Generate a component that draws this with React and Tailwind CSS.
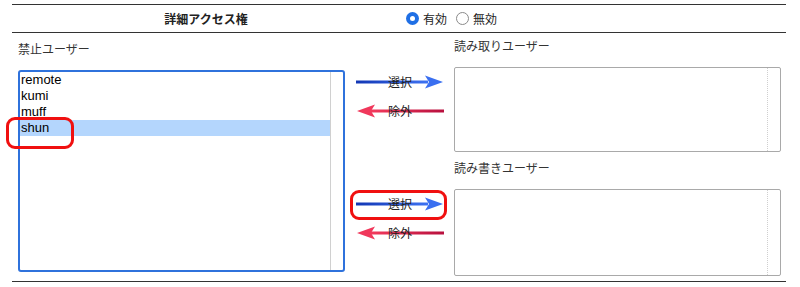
import React from 'react'

const jp = { fontFamily: '"Noto Sans CJK JP", "Noto Sans", sans-serif' }
const latin = { fontFamily: '"Liberation Sans", Arial, sans-serif' }

const ArrowRight = () => (
  <svg width="88" height="14" viewBox="0 0 88 14">
    <defs>
      <linearGradient id="gr" x1="0" x2="1" y1="0" y2="0">
        <stop offset="0" stopColor="#1236b4" />
        <stop offset="1" stopColor="#3d72f2" />
      </linearGradient>
    </defs>
    <rect x="0" y="5.5" width="72" height="3" fill="url(#gr)" />
    <path d="M69 0.5 L87 7 L69 13.5 L73 7 Z" fill="#3a6ff0" />
  </svg>
)

const ArrowLeft = () => (
  <svg width="88" height="14" viewBox="0 0 88 14">
    <defs>
      <linearGradient id="gl" x1="0" x2="1" y1="0" y2="0">
        <stop offset="0" stopColor="#f23a5c" />
        <stop offset="1" stopColor="#b8103e" />
      </linearGradient>
    </defs>
    <rect x="15" y="5.5" width="73" height="3" fill="url(#gl)" />
    <path d="M19 0.5 L1 7 L19 13.5 L15 7 Z" fill="#f0385b" />
  </svg>
)

const MoveButton = ({ dir, label }) => (
  <div className="relative w-[88px] h-[14px]">
    {dir === 'right' ? <ArrowRight /> : <ArrowLeft />}
    <span className="absolute inset-0 flex items-center justify-center text-[12px] text-[#222] leading-none" style={jp}>
      {label}
    </span>
  </div>
)

const Radio = ({ checked }) =>
  checked ? (
    <span className="shrink-0 w-[13px] h-[13px] rounded-full bg-[#1f6fe5] flex items-center justify-center">
      <span className="w-[5px] h-[5px] rounded-full bg-white" />
    </span>
  ) : (
    <span className="shrink-0 block w-[13px] h-[13px] rounded-full border border-[#8a8a8a] bg-white" />
  )

const EmptyBox = ({ h }) => (
  <div className="flex w-[327px] border-[1.5px] border-[#a9a9a9] rounded-[2px] bg-white" style={{ height: h }}>
    <div className="flex-1" />
    <div className="w-[13px] border-l border-dotted border-[#cfcfcf]" />
  </div>
)

export default function App() {
  const users = ['remote', 'kumi', 'muff', 'shun']
  return (
    <div className="relative w-[800px] h-[287px] bg-white text-[#333]">
      <div className="ml-[12px] mt-[4px] w-[774px] border-t border-[#333]">
        <div className="flex h-[28px] items-center border-b border-[#333]">
          <div className="w-[388px] text-center text-[12px] font-bold text-[#222]" style={jp}>
            詳細アクセス権
          </div>
          <div className="flex items-center text-[12px] text-[#222] pl-[6px]" style={jp}>
            <Radio checked />
            <span className="ml-[4px]">有効</span>
            <span className="ml-[9px]"><Radio /></span>
            <span className="ml-[4px]">無効</span>
          </div>
        </div>

        <div className="flex h-[249px] border-b border-[#333]">
          <div className="ml-[6px] w-[327px]">
            <div className="mt-[9px] h-[14px] text-[12px] leading-[14px] text-[#333]" style={jp}>禁止ユーザー</div>
            <div className="mt-[14px] flex h-[202px] border-2 border-[#2f72dc] rounded-[3px] bg-white">
              <div className="flex-1" style={latin}>
                {users.map((u) => (
                  <div
                    key={u}
                    className={`h-[16px] leading-[16px] text-[13px] text-black pl-[1px] ${u === 'shun' ? 'bg-[#b4d6fd]' : ''}`}
                  >
                    {u}
                  </div>
                ))}
              </div>
              <div className="w-[13px] border-l border-[#d0d0d0]" />
            </div>
          </div>

          <div className="ml-[11px] w-[88px] flex flex-col">
            <div className="mt-[42px]"><MoveButton dir="right" label="選択" /></div>
            <div className="mt-[15px]"><MoveButton dir="left" label="除外" /></div>
            <div className="mt-[79px]"><MoveButton dir="right" label="選択" /></div>
            <div className="mt-[15px]"><MoveButton dir="left" label="除外" /></div>
          </div>

          <div className="ml-[10px] w-[327px]">
            <div className="mt-[6px] h-[14px] text-[12px] leading-[14px] text-[#333]" style={jp}>読み取りユーザー</div>
            <div className="mt-[14px]"><EmptyBox h={85} /></div>
            <div className="mt-[9px] h-[14px] text-[12px] leading-[14px] text-[#333]" style={jp}>読み書きユーザー</div>
            <div className="mt-[14px]"><EmptyBox h={87} /></div>
          </div>
        </div>
      </div>

      <div className="absolute left-[6px] top-[113px] w-[68px] h-[32px] border-[3.5px] border-[#f01010] rounded-[9px]" />
      <div className="absolute left-[350px] top-[186px] w-[97px] h-[30px] border-[3.5px] border-[#f01010] rounded-[9px]" />
    </div>
  )
}
